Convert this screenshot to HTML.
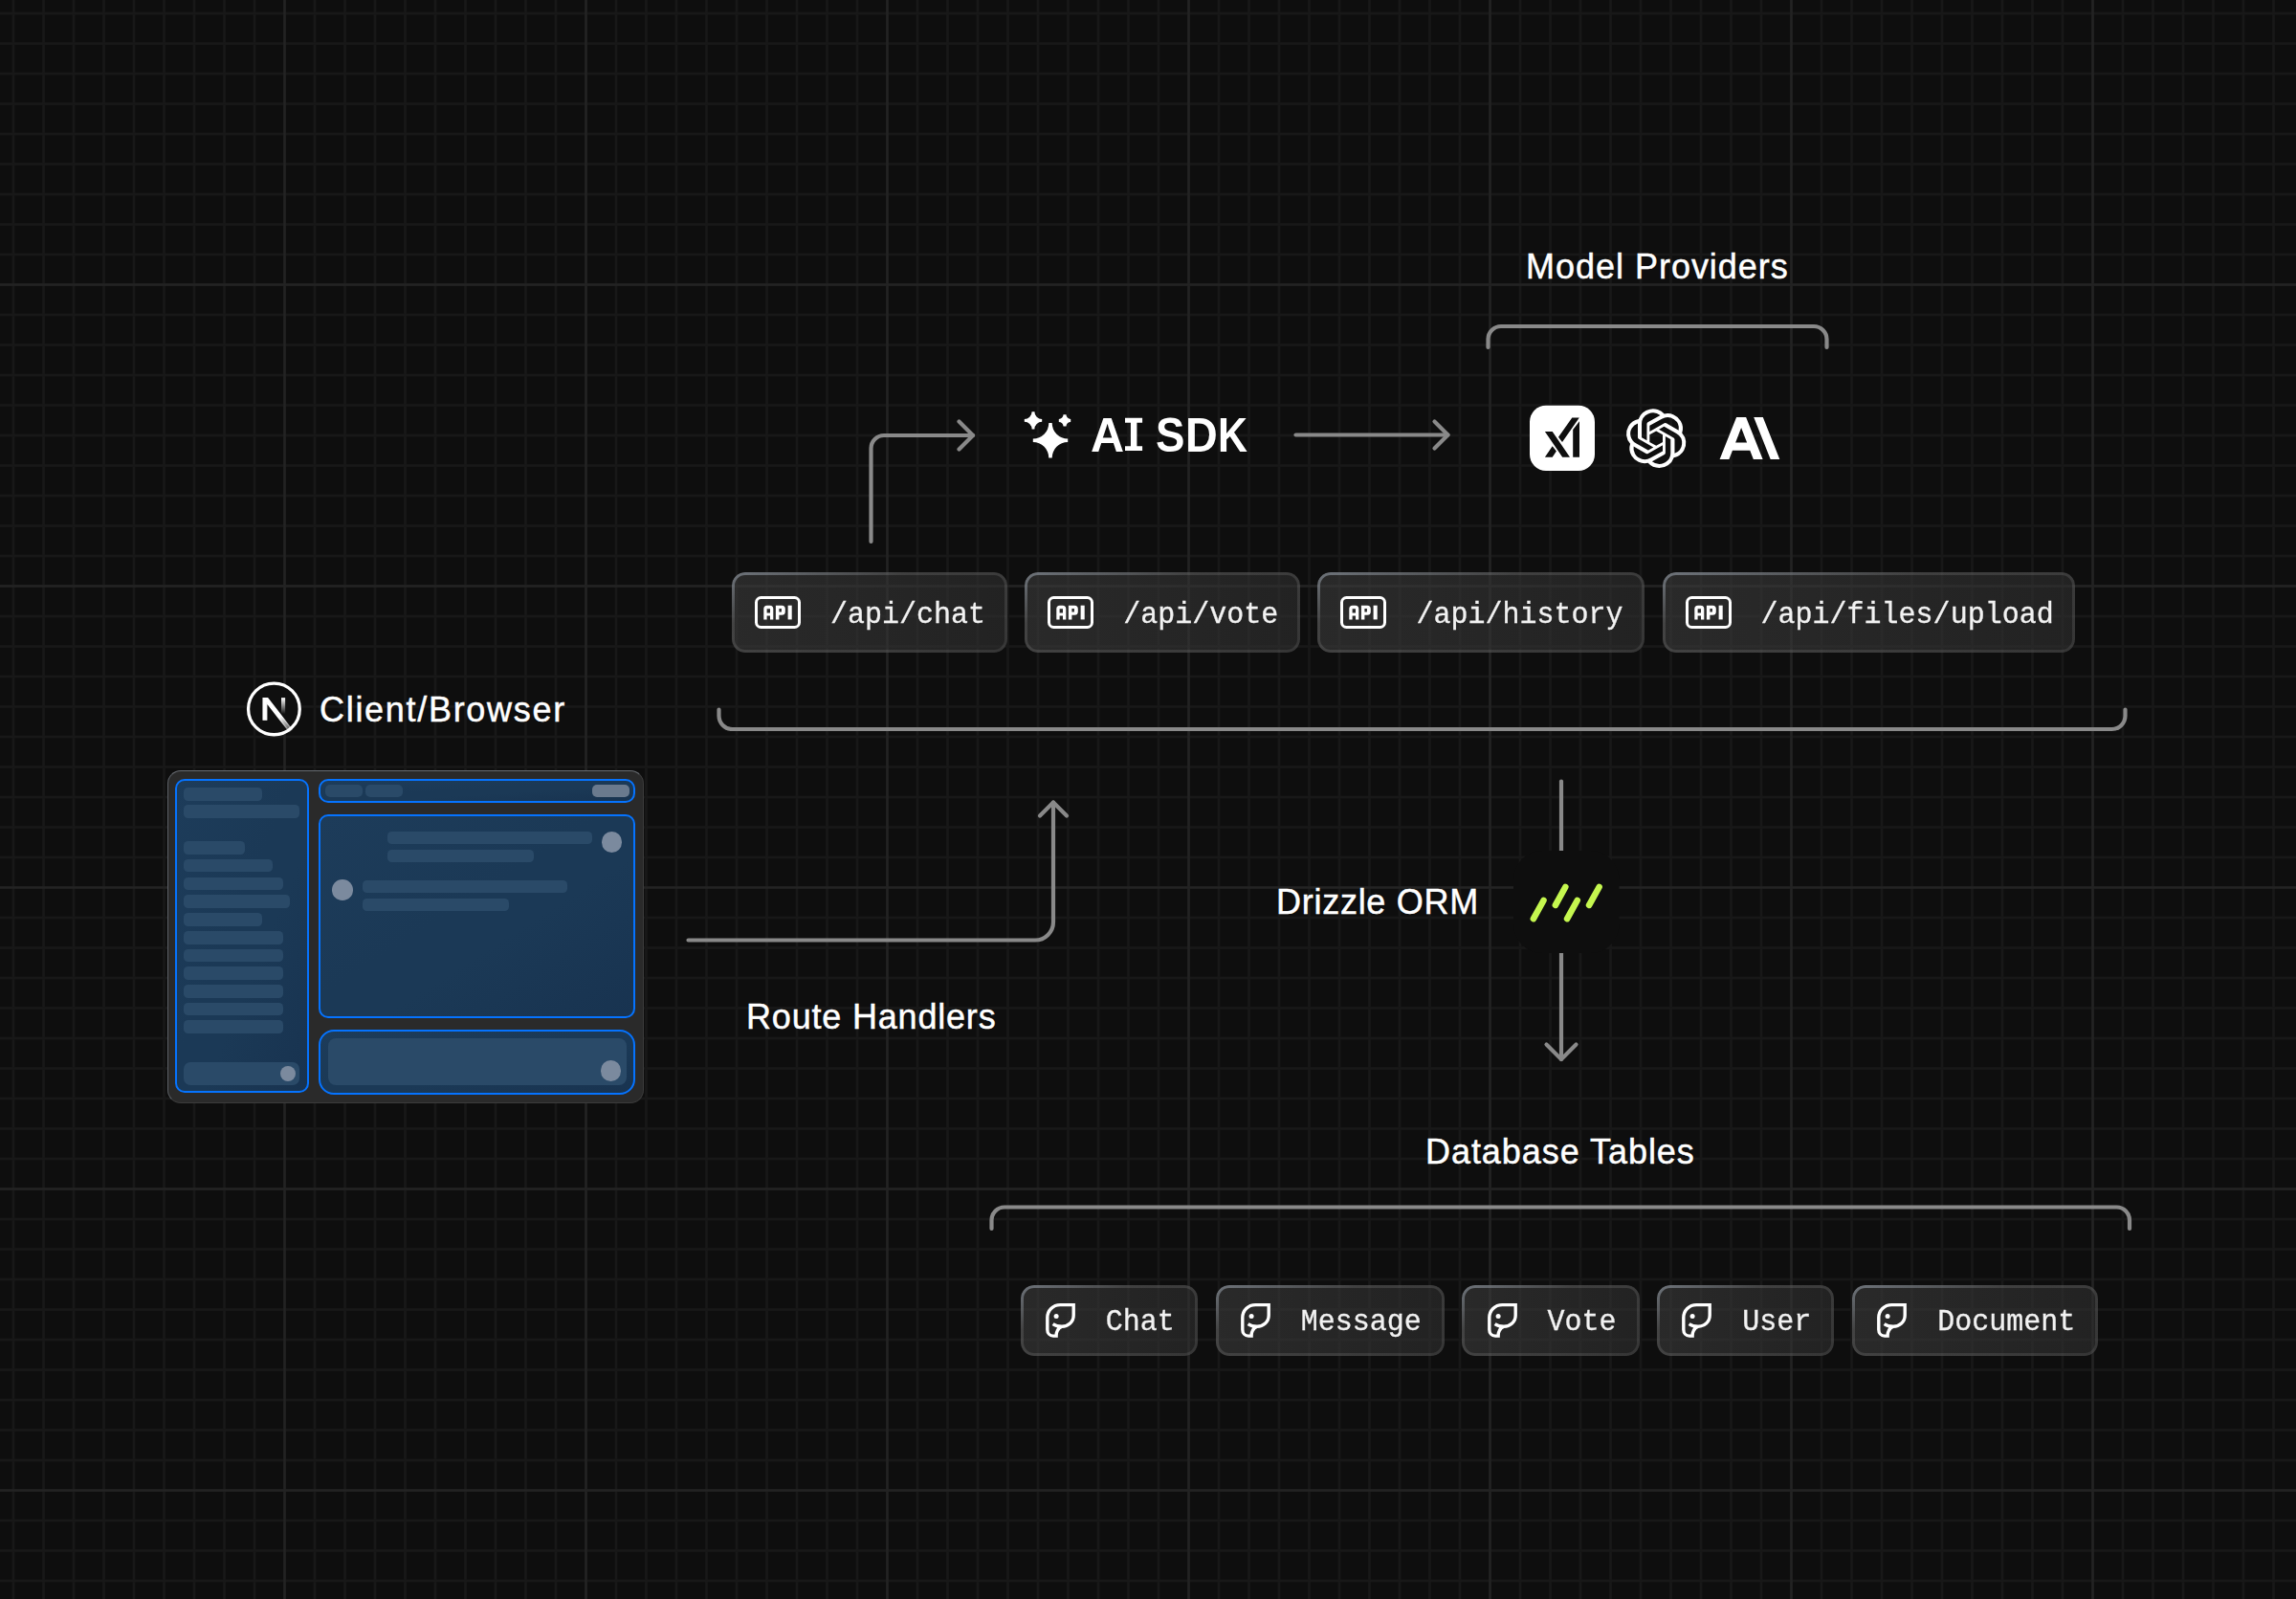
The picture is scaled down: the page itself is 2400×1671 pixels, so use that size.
<!DOCTYPE html>
<html><head><meta charset="utf-8">
<style>
html,body{margin:0;padding:0;width:2400px;height:1671px;overflow:hidden;background:#0e0e0e;}
.abs{position:absolute;}

.pill{position:absolute;box-sizing:border-box;border-radius:14px;background:linear-gradient(90deg,rgba(60,60,60,0.6),rgba(48,48,48,0.6));}
.pill::before{content:"";position:absolute;inset:0;border-radius:14px;padding:3px;background:linear-gradient(to bottom right,rgba(140,148,158,0.7) 0%,rgba(255,255,255,0.12) 32%,rgba(255,255,255,0.09) 100%);-webkit-mask:linear-gradient(#000 0 0) content-box,linear-gradient(#000 0 0);-webkit-mask-composite:xor;mask-composite:exclude;}
.mono{position:absolute;font-family:"Liberation Mono",monospace;color:#f2f2f2;-webkit-text-stroke:0.3px #f2f2f2;white-space:pre;line-height:1;font-size:30px;transform-origin:0 0;}
.pill svg{position:absolute;}

.lbl{position:absolute;font-family:"Liberation Sans",sans-serif;color:#fff;-webkit-text-stroke:0.45px #fff;white-space:pre;line-height:1;font-size:36px;}
</style></head>
<body>
<svg class="abs" style="left:0;top:0" width="2400" height="1671" viewBox="0 0 2400 1671">
<rect x="12.65" y="0" width="2.7" height="1671" fill="#181818"/>
<rect x="44.15" y="0" width="2.7" height="1671" fill="#181818"/>
<rect x="75.65" y="0" width="2.7" height="1671" fill="#181818"/>
<rect x="107.15" y="0" width="2.7" height="1671" fill="#181818"/>
<rect x="138.65" y="0" width="2.7" height="1671" fill="#181818"/>
<rect x="170.15" y="0" width="2.7" height="1671" fill="#181818"/>
<rect x="201.65" y="0" width="2.7" height="1671" fill="#181818"/>
<rect x="233.15" y="0" width="2.7" height="1671" fill="#181818"/>
<rect x="264.65" y="0" width="2.7" height="1671" fill="#181818"/>
<rect x="327.65" y="0" width="2.7" height="1671" fill="#181818"/>
<rect x="359.15" y="0" width="2.7" height="1671" fill="#181818"/>
<rect x="390.65" y="0" width="2.7" height="1671" fill="#181818"/>
<rect x="422.15" y="0" width="2.7" height="1671" fill="#181818"/>
<rect x="453.65" y="0" width="2.7" height="1671" fill="#181818"/>
<rect x="485.15" y="0" width="2.7" height="1671" fill="#181818"/>
<rect x="516.65" y="0" width="2.7" height="1671" fill="#181818"/>
<rect x="548.15" y="0" width="2.7" height="1671" fill="#181818"/>
<rect x="579.65" y="0" width="2.7" height="1671" fill="#181818"/>
<rect x="642.65" y="0" width="2.7" height="1671" fill="#181818"/>
<rect x="674.15" y="0" width="2.7" height="1671" fill="#181818"/>
<rect x="705.65" y="0" width="2.7" height="1671" fill="#181818"/>
<rect x="737.15" y="0" width="2.7" height="1671" fill="#181818"/>
<rect x="768.65" y="0" width="2.7" height="1671" fill="#181818"/>
<rect x="800.15" y="0" width="2.7" height="1671" fill="#181818"/>
<rect x="831.65" y="0" width="2.7" height="1671" fill="#181818"/>
<rect x="863.15" y="0" width="2.7" height="1671" fill="#181818"/>
<rect x="894.65" y="0" width="2.7" height="1671" fill="#181818"/>
<rect x="957.65" y="0" width="2.7" height="1671" fill="#181818"/>
<rect x="989.15" y="0" width="2.7" height="1671" fill="#181818"/>
<rect x="1020.65" y="0" width="2.7" height="1671" fill="#181818"/>
<rect x="1052.15" y="0" width="2.7" height="1671" fill="#181818"/>
<rect x="1083.65" y="0" width="2.7" height="1671" fill="#181818"/>
<rect x="1115.15" y="0" width="2.7" height="1671" fill="#181818"/>
<rect x="1146.65" y="0" width="2.7" height="1671" fill="#181818"/>
<rect x="1178.15" y="0" width="2.7" height="1671" fill="#181818"/>
<rect x="1209.65" y="0" width="2.7" height="1671" fill="#181818"/>
<rect x="1272.65" y="0" width="2.7" height="1671" fill="#181818"/>
<rect x="1304.15" y="0" width="2.7" height="1671" fill="#181818"/>
<rect x="1335.65" y="0" width="2.7" height="1671" fill="#181818"/>
<rect x="1367.15" y="0" width="2.7" height="1671" fill="#181818"/>
<rect x="1398.65" y="0" width="2.7" height="1671" fill="#181818"/>
<rect x="1430.15" y="0" width="2.7" height="1671" fill="#181818"/>
<rect x="1461.65" y="0" width="2.7" height="1671" fill="#181818"/>
<rect x="1493.15" y="0" width="2.7" height="1671" fill="#181818"/>
<rect x="1524.65" y="0" width="2.7" height="1671" fill="#181818"/>
<rect x="1587.65" y="0" width="2.7" height="1671" fill="#181818"/>
<rect x="1619.15" y="0" width="2.7" height="1671" fill="#181818"/>
<rect x="1650.65" y="0" width="2.7" height="1671" fill="#181818"/>
<rect x="1682.15" y="0" width="2.7" height="1671" fill="#181818"/>
<rect x="1713.65" y="0" width="2.7" height="1671" fill="#181818"/>
<rect x="1745.15" y="0" width="2.7" height="1671" fill="#181818"/>
<rect x="1776.65" y="0" width="2.7" height="1671" fill="#181818"/>
<rect x="1808.15" y="0" width="2.7" height="1671" fill="#181818"/>
<rect x="1839.65" y="0" width="2.7" height="1671" fill="#181818"/>
<rect x="1902.65" y="0" width="2.7" height="1671" fill="#181818"/>
<rect x="1934.15" y="0" width="2.7" height="1671" fill="#181818"/>
<rect x="1965.65" y="0" width="2.7" height="1671" fill="#181818"/>
<rect x="1997.15" y="0" width="2.7" height="1671" fill="#181818"/>
<rect x="2028.65" y="0" width="2.7" height="1671" fill="#181818"/>
<rect x="2060.15" y="0" width="2.7" height="1671" fill="#181818"/>
<rect x="2091.65" y="0" width="2.7" height="1671" fill="#181818"/>
<rect x="2123.15" y="0" width="2.7" height="1671" fill="#181818"/>
<rect x="2154.65" y="0" width="2.7" height="1671" fill="#181818"/>
<rect x="2217.65" y="0" width="2.7" height="1671" fill="#181818"/>
<rect x="2249.15" y="0" width="2.7" height="1671" fill="#181818"/>
<rect x="2280.65" y="0" width="2.7" height="1671" fill="#181818"/>
<rect x="2312.15" y="0" width="2.7" height="1671" fill="#181818"/>
<rect x="2343.65" y="0" width="2.7" height="1671" fill="#181818"/>
<rect x="2375.15" y="0" width="2.7" height="1671" fill="#181818"/>
<rect x="0" y="12.65" width="2400" height="2.7" fill="#181818"/>
<rect x="0" y="44.15" width="2400" height="2.7" fill="#181818"/>
<rect x="0" y="75.65" width="2400" height="2.7" fill="#181818"/>
<rect x="0" y="107.15" width="2400" height="2.7" fill="#181818"/>
<rect x="0" y="138.65" width="2400" height="2.7" fill="#181818"/>
<rect x="0" y="170.15" width="2400" height="2.7" fill="#181818"/>
<rect x="0" y="201.65" width="2400" height="2.7" fill="#181818"/>
<rect x="0" y="233.15" width="2400" height="2.7" fill="#181818"/>
<rect x="0" y="264.65" width="2400" height="2.7" fill="#181818"/>
<rect x="0" y="327.65" width="2400" height="2.7" fill="#181818"/>
<rect x="0" y="359.15" width="2400" height="2.7" fill="#181818"/>
<rect x="0" y="390.65" width="2400" height="2.7" fill="#181818"/>
<rect x="0" y="422.15" width="2400" height="2.7" fill="#181818"/>
<rect x="0" y="453.65" width="2400" height="2.7" fill="#181818"/>
<rect x="0" y="485.15" width="2400" height="2.7" fill="#181818"/>
<rect x="0" y="516.65" width="2400" height="2.7" fill="#181818"/>
<rect x="0" y="548.15" width="2400" height="2.7" fill="#181818"/>
<rect x="0" y="579.65" width="2400" height="2.7" fill="#181818"/>
<rect x="0" y="642.65" width="2400" height="2.7" fill="#181818"/>
<rect x="0" y="674.15" width="2400" height="2.7" fill="#181818"/>
<rect x="0" y="705.65" width="2400" height="2.7" fill="#181818"/>
<rect x="0" y="737.15" width="2400" height="2.7" fill="#181818"/>
<rect x="0" y="768.65" width="2400" height="2.7" fill="#181818"/>
<rect x="0" y="800.15" width="2400" height="2.7" fill="#181818"/>
<rect x="0" y="831.65" width="2400" height="2.7" fill="#181818"/>
<rect x="0" y="863.15" width="2400" height="2.7" fill="#181818"/>
<rect x="0" y="894.65" width="2400" height="2.7" fill="#181818"/>
<rect x="0" y="957.65" width="2400" height="2.7" fill="#181818"/>
<rect x="0" y="989.15" width="2400" height="2.7" fill="#181818"/>
<rect x="0" y="1020.65" width="2400" height="2.7" fill="#181818"/>
<rect x="0" y="1052.15" width="2400" height="2.7" fill="#181818"/>
<rect x="0" y="1083.65" width="2400" height="2.7" fill="#181818"/>
<rect x="0" y="1115.15" width="2400" height="2.7" fill="#181818"/>
<rect x="0" y="1146.65" width="2400" height="2.7" fill="#181818"/>
<rect x="0" y="1178.15" width="2400" height="2.7" fill="#181818"/>
<rect x="0" y="1209.65" width="2400" height="2.7" fill="#181818"/>
<rect x="0" y="1272.65" width="2400" height="2.7" fill="#181818"/>
<rect x="0" y="1304.15" width="2400" height="2.7" fill="#181818"/>
<rect x="0" y="1335.65" width="2400" height="2.7" fill="#181818"/>
<rect x="0" y="1367.15" width="2400" height="2.7" fill="#181818"/>
<rect x="0" y="1398.65" width="2400" height="2.7" fill="#181818"/>
<rect x="0" y="1430.15" width="2400" height="2.7" fill="#181818"/>
<rect x="0" y="1461.65" width="2400" height="2.7" fill="#181818"/>
<rect x="0" y="1493.15" width="2400" height="2.7" fill="#181818"/>
<rect x="0" y="1524.65" width="2400" height="2.7" fill="#181818"/>
<rect x="0" y="1587.65" width="2400" height="2.7" fill="#181818"/>
<rect x="0" y="1619.15" width="2400" height="2.7" fill="#181818"/>
<rect x="0" y="1650.65" width="2400" height="2.7" fill="#181818"/>
<rect x="296.15" y="0" width="2.7" height="1671" fill="#232323"/>
<rect x="611.15" y="0" width="2.7" height="1671" fill="#232323"/>
<rect x="926.15" y="0" width="2.7" height="1671" fill="#232323"/>
<rect x="1241.15" y="0" width="2.7" height="1671" fill="#232323"/>
<rect x="1556.15" y="0" width="2.7" height="1671" fill="#232323"/>
<rect x="1871.15" y="0" width="2.7" height="1671" fill="#232323"/>
<rect x="2186.15" y="0" width="2.7" height="1671" fill="#232323"/>
<rect x="0" y="296.15" width="2400" height="2.7" fill="#232323"/>
<rect x="0" y="611.15" width="2400" height="2.7" fill="#232323"/>
<rect x="0" y="926.15" width="2400" height="2.7" fill="#232323"/>
<rect x="0" y="1241.15" width="2400" height="2.7" fill="#232323"/>
<rect x="0" y="1556.15" width="2400" height="2.7" fill="#232323"/>
<path fill="none" stroke="#898989" stroke-width="4.2" stroke-linecap="round" stroke-linejoin="round" d="M1555.5 363 V354.5 A13.5 13.5 0 0 1 1569 341 H1896 A13.5 13.5 0 0 1 1909.5 354.5 V363"/>
<path fill="none" stroke="#898989" stroke-width="4.2" stroke-linecap="round" stroke-linejoin="round" d="M910.5 566 V468.5 A13.5 13.5 0 0 1 924 455 H1017"/>
<path fill="none" stroke="#898989" stroke-width="4.2" stroke-linecap="round" stroke-linejoin="round" d="M1002.5 440.5 L1017 455 L1002.5 469.5"/>
<path fill="none" stroke="#898989" stroke-width="4.2" stroke-linecap="round" stroke-linejoin="round" d="M1354.5 454.5 H1513.5"/>
<path fill="none" stroke="#898989" stroke-width="4.2" stroke-linecap="round" stroke-linejoin="round" d="M1499.5 440.5 L1513.5 454.5 L1499.5 468.5"/>
<path fill="none" stroke="#898989" stroke-width="4.2" stroke-linecap="round" stroke-linejoin="round" d="M751.5 741.5 V748 A14 14 0 0 0 765.5 762 H2207.5 A14 14 0 0 0 2221.5 748 V741.5"/>
<path fill="none" stroke="#898989" stroke-width="4.2" stroke-linecap="round" stroke-linejoin="round" d="M719.5 982.5 H1082 A19 19 0 0 0 1101 963.5 V838.5"/>
<path fill="none" stroke="#898989" stroke-width="4.2" stroke-linecap="round" stroke-linejoin="round" d="M1087 852.5 L1101 838.5 L1115 852.5"/>
<path fill="none" stroke="#898989" stroke-width="4.2" stroke-linecap="round" stroke-linejoin="round" d="M1632 816.5 V891"/>
<path fill="none" stroke="#898989" stroke-width="4.2" stroke-linecap="round" stroke-linejoin="round" d="M1632 995 V1107"/>
<path fill="none" stroke="#898989" stroke-width="4.2" stroke-linecap="round" stroke-linejoin="round" d="M1616.5 1091.5 L1632 1107 L1647.5 1091.5"/>
<path fill="none" stroke="#898989" stroke-width="4.2" stroke-linecap="round" stroke-linejoin="round" d="M1036.5 1284 V1275 A13.5 13.5 0 0 1 1050 1261.5 H2212.5 A13.5 13.5 0 0 1 2226 1275 V1284"/>
<rect x="1582" y="889" width="110.5" height="107" rx="30" fill="#0e0e0e"/>
<line x1="1602.9" y1="960.1" x2="1613.5" y2="941" stroke="#c5f74f" stroke-width="6.6" stroke-linecap="round"/>
<line x1="1625.9" y1="945.9" x2="1636.3" y2="927" stroke="#c5f74f" stroke-width="6.6" stroke-linecap="round"/>
<line x1="1638.1" y1="960.1" x2="1648.7" y2="941" stroke="#c5f74f" stroke-width="6.6" stroke-linecap="round"/>
<line x1="1661.1" y1="945.9" x2="1671.6" y2="927" stroke="#c5f74f" stroke-width="6.6" stroke-linecap="round"/>
</svg>
<div class="lbl" style="left:1595px;top:260.5px;letter-spacing:0.98px">Model Providers</div>
<div class="lbl" style="left:334px;top:723.5px;letter-spacing:1.7px">Client/Browser</div>
<div class="lbl" style="left:780px;top:1045px;letter-spacing:0.81px">Route Handlers</div>
<div class="lbl" style="left:1334px;top:925px;letter-spacing:0.73px">Drizzle ORM</div>
<div class="lbl" style="left:1490px;top:1186px;letter-spacing:0.95px">Database Tables</div>
<div class="pill" style="left:765px;top:598px;width:287.5px;height:84px"><svg style="left:24px;top:25.4px" width="48" height="34" viewBox="0 0 48 34"><rect x="1.5" y="1.5" width="45" height="31" rx="5" fill="none" stroke="#fff" stroke-width="3"/><path fill="#fff" fill-rule="evenodd" d="M9.3 24.4V13.3Q9.3 9.7 12.9 9.7H15.7Q19.3 9.7 19.3 13.3V24.4H16V20.6H12.6V24.4ZM12.6 13.2H16V17.5H12.6Z"/><path fill="#fff" fill-rule="evenodd" d="M21.9 24.4V9.7H28.2Q31.8 9.7 31.8 13.3V16.2Q31.8 19.8 28.2 19.8H25.4V24.4ZM25.4 13.1H27.9V16.4H25.4Z"/><rect x="34.6" y="9.7" width="4.1" height="14.7" fill="#fff"/></svg><div class="mono" style="left:103px;top:28.5px;transform:scaleY(1.05)">/api/chat</div></div>
<div class="pill" style="left:1071.2px;top:598px;width:287.5px;height:84px"><svg style="left:24px;top:25.4px" width="48" height="34" viewBox="0 0 48 34"><rect x="1.5" y="1.5" width="45" height="31" rx="5" fill="none" stroke="#fff" stroke-width="3"/><path fill="#fff" fill-rule="evenodd" d="M9.3 24.4V13.3Q9.3 9.7 12.9 9.7H15.7Q19.3 9.7 19.3 13.3V24.4H16V20.6H12.6V24.4ZM12.6 13.2H16V17.5H12.6Z"/><path fill="#fff" fill-rule="evenodd" d="M21.9 24.4V9.7H28.2Q31.8 9.7 31.8 13.3V16.2Q31.8 19.8 28.2 19.8H25.4V24.4ZM25.4 13.1H27.9V16.4H25.4Z"/><rect x="34.6" y="9.7" width="4.1" height="14.7" fill="#fff"/></svg><div class="mono" style="left:103px;top:28.5px;transform:scaleY(1.05)">/api/vote</div></div>
<div class="pill" style="left:1377.4px;top:598px;width:341.5px;height:84px"><svg style="left:24px;top:25.4px" width="48" height="34" viewBox="0 0 48 34"><rect x="1.5" y="1.5" width="45" height="31" rx="5" fill="none" stroke="#fff" stroke-width="3"/><path fill="#fff" fill-rule="evenodd" d="M9.3 24.4V13.3Q9.3 9.7 12.9 9.7H15.7Q19.3 9.7 19.3 13.3V24.4H16V20.6H12.6V24.4ZM12.6 13.2H16V17.5H12.6Z"/><path fill="#fff" fill-rule="evenodd" d="M21.9 24.4V9.7H28.2Q31.8 9.7 31.8 13.3V16.2Q31.8 19.8 28.2 19.8H25.4V24.4ZM25.4 13.1H27.9V16.4H25.4Z"/><rect x="34.6" y="9.7" width="4.1" height="14.7" fill="#fff"/></svg><div class="mono" style="left:103px;top:28.5px;transform:scaleY(1.05)">/api/history</div></div>
<div class="pill" style="left:1737.6px;top:598px;width:431px;height:84px"><svg style="left:24px;top:25.4px" width="48" height="34" viewBox="0 0 48 34"><rect x="1.5" y="1.5" width="45" height="31" rx="5" fill="none" stroke="#fff" stroke-width="3"/><path fill="#fff" fill-rule="evenodd" d="M9.3 24.4V13.3Q9.3 9.7 12.9 9.7H15.7Q19.3 9.7 19.3 13.3V24.4H16V20.6H12.6V24.4ZM12.6 13.2H16V17.5H12.6Z"/><path fill="#fff" fill-rule="evenodd" d="M21.9 24.4V9.7H28.2Q31.8 9.7 31.8 13.3V16.2Q31.8 19.8 28.2 19.8H25.4V24.4ZM25.4 13.1H27.9V16.4H25.4Z"/><rect x="34.6" y="9.7" width="4.1" height="14.7" fill="#fff"/></svg><div class="mono" style="left:103px;top:28.5px;transform:scaleY(1.05)">/api/files/upload</div></div>
<div class="pill" style="left:1066.8px;top:1343px;width:185.2px;height:74px"><svg style="left:18.2px;top:12px" width="50" height="50" viewBox="0 0 50 50"><path fill="none" stroke="#fff" stroke-width="3.4" stroke-linejoin="miter" stroke-linecap="butt" d="M15.6 28.6C18.5 30.6 21.5 31.2 25 31.2C31.5 31.2 37.2 26.5 37.2 19.5V8.6H23.4C15.6 8.6 9.8 14.4 9.8 22V34.4C9.8 38.2 12.4 41.1 16 41.1H19.1C19.1 39.5 19.3 37.5 20.2 35.8C21.2 33.6 23 32 25 31.2"/><circle cx="19.1" cy="20.5" r="2.5" fill="#fff"/></svg><div class="mono" style="left:89px;top:22.5px;transform:scaleY(1.05)">Chat</div></div>
<div class="pill" style="left:1270.7px;top:1343px;width:239px;height:74px"><svg style="left:18.2px;top:12px" width="50" height="50" viewBox="0 0 50 50"><path fill="none" stroke="#fff" stroke-width="3.4" stroke-linejoin="miter" stroke-linecap="butt" d="M15.6 28.6C18.5 30.6 21.5 31.2 25 31.2C31.5 31.2 37.2 26.5 37.2 19.5V8.6H23.4C15.6 8.6 9.8 14.4 9.8 22V34.4C9.8 38.2 12.4 41.1 16 41.1H19.1C19.1 39.5 19.3 37.5 20.2 35.8C21.2 33.6 23 32 25 31.2"/><circle cx="19.1" cy="20.5" r="2.5" fill="#fff"/></svg><div class="mono" style="left:89px;top:22.5px;transform:scaleY(1.05)">Message</div></div>
<div class="pill" style="left:1528.4px;top:1343px;width:185.2px;height:74px"><svg style="left:18.2px;top:12px" width="50" height="50" viewBox="0 0 50 50"><path fill="none" stroke="#fff" stroke-width="3.4" stroke-linejoin="miter" stroke-linecap="butt" d="M15.6 28.6C18.5 30.6 21.5 31.2 25 31.2C31.5 31.2 37.2 26.5 37.2 19.5V8.6H23.4C15.6 8.6 9.8 14.4 9.8 22V34.4C9.8 38.2 12.4 41.1 16 41.1H19.1C19.1 39.5 19.3 37.5 20.2 35.8C21.2 33.6 23 32 25 31.2"/><circle cx="19.1" cy="20.5" r="2.5" fill="#fff"/></svg><div class="mono" style="left:89px;top:22.5px;transform:scaleY(1.05)">Vote</div></div>
<div class="pill" style="left:1732.3px;top:1343px;width:185.2px;height:74px"><svg style="left:18.2px;top:12px" width="50" height="50" viewBox="0 0 50 50"><path fill="none" stroke="#fff" stroke-width="3.4" stroke-linejoin="miter" stroke-linecap="butt" d="M15.6 28.6C18.5 30.6 21.5 31.2 25 31.2C31.5 31.2 37.2 26.5 37.2 19.5V8.6H23.4C15.6 8.6 9.8 14.4 9.8 22V34.4C9.8 38.2 12.4 41.1 16 41.1H19.1C19.1 39.5 19.3 37.5 20.2 35.8C21.2 33.6 23 32 25 31.2"/><circle cx="19.1" cy="20.5" r="2.5" fill="#fff"/></svg><div class="mono" style="left:89px;top:22.5px;transform:scaleY(1.05)">User</div></div>
<div class="pill" style="left:1936.2px;top:1343px;width:257px;height:74px"><svg style="left:18.2px;top:12px" width="50" height="50" viewBox="0 0 50 50"><path fill="none" stroke="#fff" stroke-width="3.4" stroke-linejoin="miter" stroke-linecap="butt" d="M15.6 28.6C18.5 30.6 21.5 31.2 25 31.2C31.5 31.2 37.2 26.5 37.2 19.5V8.6H23.4C15.6 8.6 9.8 14.4 9.8 22V34.4C9.8 38.2 12.4 41.1 16 41.1H19.1C19.1 39.5 19.3 37.5 20.2 35.8C21.2 33.6 23 32 25 31.2"/><circle cx="19.1" cy="20.5" r="2.5" fill="#fff"/></svg><div class="mono" style="left:89px;top:22.5px;transform:scaleY(1.05)">Document</div></div>
<svg class="abs" style="left:0;top:0" width="2400" height="1671" viewBox="0 0 2400 1671">
<path fill="#fff" d="M1096.30 442.10H1099.70A16.50 16.50 0 0 0 1116.20 458.60V462.00A16.50 16.50 0 0 0 1099.70 478.50H1096.30A16.50 16.50 0 0 0 1079.80 462.00V458.60A16.50 16.50 0 0 0 1096.30 442.10Z M1078.60 430.20H1081.40A7.80 7.80 0 0 0 1089.20 438.00V440.80A7.80 7.80 0 0 0 1081.40 448.60H1078.60A7.80 7.80 0 0 0 1070.80 440.80V438.00A7.80 7.80 0 0 0 1078.60 430.20Z M1111.50 433.20H1114.50A4.70 4.70 0 0 0 1119.20 437.90V440.90A4.70 4.70 0 0 0 1114.50 445.60H1111.50A4.70 4.70 0 0 0 1106.80 440.90V437.90A4.70 4.70 0 0 0 1111.50 433.20Z"/>
<g transform="translate(1595 420)"><rect x="4" y="3.75" width="68" height="68.25" rx="17" fill="#fff"/><path fill="#0f0f0f" d="M19.9 31H27.7L46 57.7H38.2Z M19.9 57.7H27.7L31.9 51.4L27.7 46.2Z M34 36.8L38 42L55.8 16.4H48.3Z M49.2 29.1L56 20.2V57.7H49.2Z"/></g>
<g transform="translate(1699.6 427.3) scale(2.63 2.57)"><path fill="#fff" d="M22.2819 9.8211a5.9847 5.9847 0 0 0-.5157-4.9108 6.0462 6.0462 0 0 0-6.5098-2.9A6.0651 6.0651 0 0 0 4.9807 4.1818a5.9847 5.9847 0 0 0-3.9977 2.9 6.0462 6.0462 0 0 0 .7427 7.0966 5.98 5.98 0 0 0 .511 4.9107 6.051 6.051 0 0 0 6.5146 2.9001A5.9847 5.9847 0 0 0 13.2599 24a6.0557 6.0557 0 0 0 5.7718-4.2058 5.9894 5.9894 0 0 0 3.9977-2.9001 6.0557 6.0557 0 0 0-.7475-7.0729zm-9.022 12.6081a4.4755 4.4755 0 0 1-2.8764-1.0408l.1419-.0804 4.7783-2.7582a.7948.7948 0 0 0 .3927-.6813v-6.7369l2.02 1.1686a.071.071 0 0 1 .038.052v5.5826a4.504 4.504 0 0 1-4.4945 4.4944zm-9.6607-4.1254a4.4708 4.4708 0 0 1-.5346-3.0137l.142.0852 4.783 2.7582a.7712.7712 0 0 0 .7806 0l5.8428-3.3685v2.3324a.0804.0804 0 0 1-.0332.0615L9.74 19.9502a4.4992 4.4992 0 0 1-6.1408-1.6464zM2.3408 7.8956a4.485 4.485 0 0 1 2.3655-1.9728V11.6a.7664.7664 0 0 0 .3879.6765l5.8144 3.3543-2.0201 1.1685a.0757.0757 0 0 1-.071 0l-4.8303-2.7865A4.504 4.504 0 0 1 2.3408 7.872zm16.5963 3.8558L13.1038 8.364 15.1192 7.2a.0757.0757 0 0 1 .071 0l4.8303 2.7913a4.4944 4.4944 0 0 1-.6765 8.1042v-5.6772a.79.79 0 0 0-.407-.667zm2.0107-3.0231l-.142-.0852-4.7735-2.7818a.7759.7759 0 0 0-.7854 0L9.409 9.2297V6.8974a.0662.0662 0 0 1 .0284-.0615l4.8303-2.7866a4.4992 4.4992 0 0 1 6.6802 4.66zM8.3065 12.863l-2.02-1.1638a.0804.0804 0 0 1-.038-.0567V6.0742a4.4992 4.4992 0 0 1 7.3757-3.4537l-.142.0805L8.704 5.459a.7948.7948 0 0 0-.3927.6813zm1.0976-2.3654l2.602-1.4998 2.6069 1.4998v2.9994l-2.5974 1.5-2.6067-1.5Z"/></g>
<g transform="translate(1797.6 426.65) scale(2.6125)"><path fill="#fff" d="M17.3041 3.541h-3.6718l6.696 16.918H24Zm-10.6082 0L0 20.459h3.7442l1.3693-3.5527h7.0052l1.3693 3.5527h3.7442L10.5363 3.5409Zm-.3712 10.2232 2.2914-5.9456 2.2914 5.9456Z"/></g>
<g transform="translate(257.9 712.4) scale(0.3167)"><circle cx="90" cy="90" r="84.8" fill="#0f0f0f" stroke="#fff" stroke-width="10.4"/><defs><linearGradient id="ng1" x1="109" y1="116.5" x2="144.5" y2="160.5" gradientUnits="userSpaceOnUse"><stop stop-color="#fff"/><stop offset="1" stop-color="#fff" stop-opacity="0.25"/></linearGradient><linearGradient id="ng2" x1="121" y1="54" x2="120.8" y2="106.8" gradientUnits="userSpaceOnUse"><stop stop-color="#fff"/><stop offset="1" stop-color="#fff" stop-opacity="0"/></linearGradient></defs><path d="M149.508 157.52L69.142 54H54V125.97H66.1136V69.3836L139.999 164.845C143.333 162.614 146.509 160.165 149.508 157.52Z" fill="url(#ng1)" stroke="url(#ng1)" stroke-width="3.5"/><rect x="114" y="53" width="13" height="73" fill="url(#ng2)"/></g>
</svg>
<div class="lbl" style="left:1139.5px;top:429.8px;font-size:49.35px;font-weight:700;-webkit-text-stroke:0;transform-origin:0 0;transform:scaleX(0.985)">A</div>
<div class="lbl" style="left:1208.3px;top:429.8px;font-size:49.35px;font-weight:700;-webkit-text-stroke:0;transform-origin:0 0;transform:scaleX(0.925)">S</div>
<div class="lbl" style="left:1239.2px;top:429.8px;font-size:49.35px;font-weight:700;-webkit-text-stroke:0;transform-origin:0 0;transform:scaleX(0.947)">D</div>
<div class="lbl" style="left:1272.9px;top:429.8px;font-size:49.35px;font-weight:700;-webkit-text-stroke:0;transform-origin:0 0;transform:scaleX(0.87)">K</div>
<svg class="abs" style="left:0;top:0" width="2400" height="600" viewBox="0 0 2400 600"><path fill="#fff" d="M1176 436.8H1194.1V441.8H1188.4V466.2H1194.1V471.1H1176V466.2H1181.9V441.8H1176Z"/></svg>
<div class="abs" style="left:174.5px;top:804.5px;width:498px;height:348px;box-sizing:border-box;border-radius:14px;background:#2a2a2a;border:1.5px solid #3c3c3c;border-top-color:#686c72;border-left-color:#5c6066"></div>
<div class="abs" style="left:183px;top:814px;width:139.5px;height:328px;box-sizing:border-box;border:2.6px solid #0573ff;border-radius:10px;background:linear-gradient(to bottom right,#1d3c5a,#1b3956 45%,#1b3956 60%,#183350)"></div>
<div class="abs" style="left:333.3px;top:813.5px;width:330.7px;height:25.7px;box-sizing:border-box;border:2.6px solid #0573ff;border-radius:10px;background:linear-gradient(to bottom right,#1d3c5a,#1b3956 45%,#1b3956 60%,#183350)"></div>
<div class="abs" style="left:333.3px;top:850.6px;width:330.7px;height:213.8px;box-sizing:border-box;border:2.6px solid #0573ff;border-radius:10px;background:linear-gradient(to bottom right,#1d3c5a,#1b3956 45%,#1b3956 60%,#183350)"></div>
<div class="abs" style="left:333.3px;top:1075.9px;width:330.7px;height:68px;box-sizing:border-box;border:2.6px solid #0573ff;border-radius:16px;background:linear-gradient(to bottom right,#1d3c5a,#1b3956 45%,#1b3956 60%,#183350)"></div>
<div class="abs" style="left:191.8px;top:823.4px;width:82.2px;height:13.5px;border-radius:4.5px;background:#2a4a68"></div>
<div class="abs" style="left:191.8px;top:841.4px;width:121.4px;height:13.5px;border-radius:4.5px;background:#2a4a68"></div>
<div class="abs" style="left:191.8px;top:879px;width:64.2px;height:13.5px;border-radius:4.5px;background:#2a4a68"></div>
<div class="abs" style="left:191.8px;top:897.5px;width:93.6px;height:13.5px;border-radius:4.5px;background:#2a4a68"></div>
<div class="abs" style="left:191.8px;top:916.5px;width:104.0px;height:13.5px;border-radius:4.5px;background:#2a4a68"></div>
<div class="abs" style="left:191.8px;top:935px;width:111.0px;height:13.5px;border-radius:4.5px;background:#2a4a68"></div>
<div class="abs" style="left:191.8px;top:954.2px;width:82.2px;height:13.5px;border-radius:4.5px;background:#2a4a68"></div>
<div class="abs" style="left:191.8px;top:973.1px;width:103.9px;height:13.5px;border-radius:4.5px;background:#2a4a68"></div>
<div class="abs" style="left:191.8px;top:991.7px;width:103.9px;height:13.5px;border-radius:4.5px;background:#2a4a68"></div>
<div class="abs" style="left:191.8px;top:1010.3px;width:103.9px;height:13.5px;border-radius:4.5px;background:#2a4a68"></div>
<div class="abs" style="left:191.8px;top:1029.2px;width:103.9px;height:13.5px;border-radius:4.5px;background:#2a4a68"></div>
<div class="abs" style="left:191.8px;top:1047.9px;width:103.9px;height:13.5px;border-radius:4.5px;background:#2a4a68"></div>
<div class="abs" style="left:191.8px;top:1066.2px;width:103.9px;height:13.5px;border-radius:4.5px;background:#2a4a68"></div>
<div class="abs" style="left:192.4px;top:1109.7px;width:120.7px;height:24px;border-radius:7px;background:#2a4a68"></div>
<div class="abs" style="left:293.1px;top:1113.7px;width:16px;height:16px;border-radius:50%;background:#7b8a9e"></div>
<div class="abs" style="left:339.5px;top:819.7px;width:39.7px;height:13.8px;border-radius:5px;background:#2a4a68"></div>
<div class="abs" style="left:381.6px;top:819.7px;width:39.6px;height:13.8px;border-radius:5px;background:#2a4a68"></div>
<div class="abs" style="left:619.3px;top:819.7px;width:38.5px;height:13.8px;border-radius:5px;background:#6a7a8e"></div>
<div class="abs" style="left:404.7px;top:869.2px;width:214.6px;height:12.9px;border-radius:4.5px;background:#2a4a68"></div>
<div class="abs" style="left:404.7px;top:888.1px;width:153.1px;height:12.6px;border-radius:4.5px;background:#2a4a68"></div>
<div class="abs" style="left:628.6px;top:869.2px;width:21.6px;height:21.6px;border-radius:50%;background:#7b8a9e"></div>
<div class="abs" style="left:347.3px;top:919.4000000000001px;width:21.6px;height:21.6px;border-radius:50%;background:#7b8a9e"></div>
<div class="abs" style="left:378.6px;top:920px;width:214.6px;height:12.6px;border-radius:4.5px;background:#2a4a68"></div>
<div class="abs" style="left:378.6px;top:938.6px;width:153.1px;height:13.2px;border-radius:4.5px;background:#2a4a68"></div>
<div class="abs" style="left:343.1px;top:1085.4px;width:312px;height:48.8px;border-radius:8px;background:#2a4a68"></div>
<div class="abs" style="left:627.6px;top:1108.0px;width:21.6px;height:21.6px;border-radius:50%;background:#7b8a9e"></div>
</body></html>
